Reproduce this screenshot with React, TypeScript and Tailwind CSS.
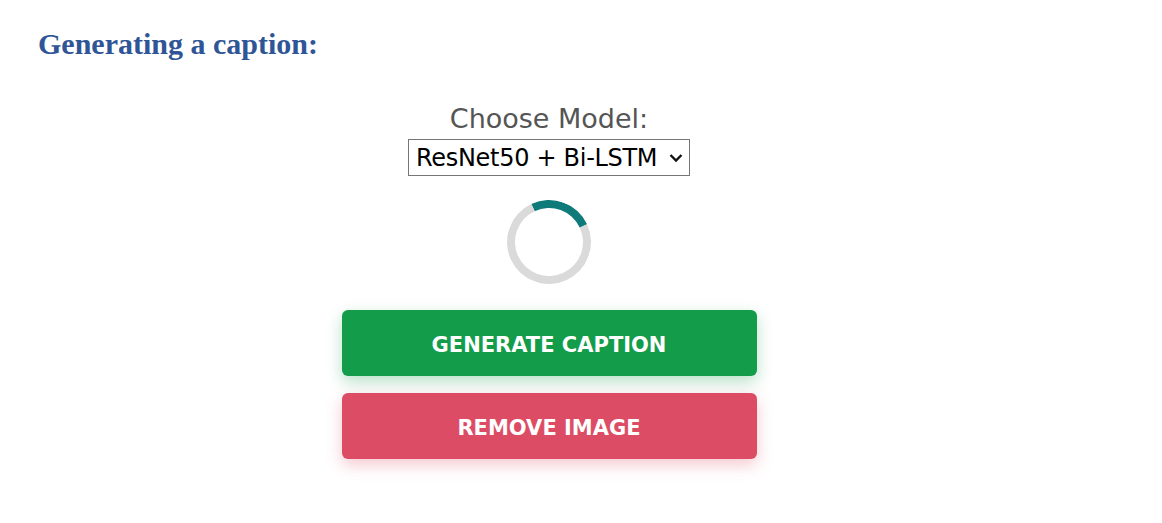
import React from "react";

export default function App() {
  return (
    <div className="min-h-[523px] w-full bg-white pl-[38px] pr-[102px] pt-[28px]">
      <h2 className="text-[30px] font-bold leading-[32px] text-[#2f5597]" style={{ fontFamily: '"Liberation Serif", serif' }}>
        Generating a caption:
      </h2>
      <div className="flex flex-col items-center" style={{ fontFamily: '"DejaVu Sans", sans-serif' }}>
        <label className="mt-[42px] text-[27px] leading-[34px] text-[#555555]">Choose Model:</label>
        <div className="mt-[3px] flex h-[37px] w-[282px] items-center border border-[#767676] bg-white pl-[7px] pr-[6px]">
          <span className="flex-1 text-[24px] leading-[34px] tracking-[-0.3px] text-black">ResNet50 + Bi-LSTM</span>
          <svg width="14" height="10" viewBox="0 0 14 10" className="shrink-0">
            <path d="M1.5 2 L7 7.5 L12.5 2" fill="none" stroke="#111" strokeWidth="2.4" />
          </svg>
        </div>
        <div className="mt-[24px] h-[84px] w-[84px] rotate-[20deg] rounded-full border-8 border-[#dadada] border-t-[#0f7a7a]" />
        <button className="mt-[26px] flex h-[66px] w-[415px] items-center justify-center rounded-[6px] bg-[#139c4a] pt-[5px] text-[21px] font-bold uppercase text-white shadow-[0_6px_16px_rgba(19,156,74,0.3)]">
          Generate Caption
        </button>
        <button className="mt-[17px] flex h-[66px] w-[415px] items-center justify-center rounded-[6px] bg-[#dc4c64] pt-[5px] text-[21px] font-bold uppercase text-white shadow-[0_6px_16px_rgba(220,76,100,0.3)]">
          Remove Image
        </button>
      </div>
    </div>
  );
}
